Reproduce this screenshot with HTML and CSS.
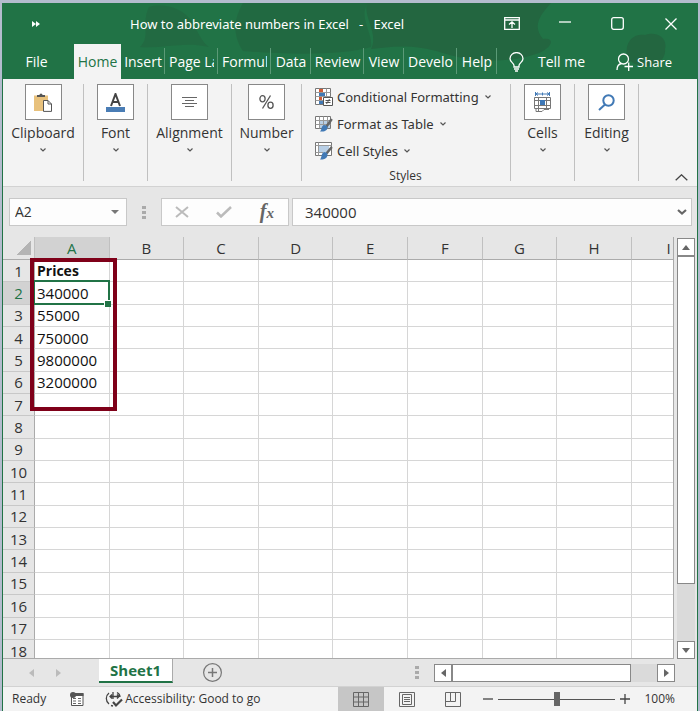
FILE: index.html
```html
<!DOCTYPE html>
<html lang="en">
<head>
    <meta charset="UTF-8">
    <meta name="viewport" content="width=device-width, initial-scale=1.0">
    <title>How to abbreviate numbers in Excel - Excel</title>
    <link rel="stylesheet" href="styles.css">
</head>
<body>
    <div class="window">
        <!-- Title bar and ribbon tabs -->
        <header class="top">
            <svg class="top-art" viewBox="0 0 694 76" preserveAspectRatio="none" aria-hidden="true">
                <path d="M146 4C160 0 180 4 190 20C196 32 200 40 206 44C180 38 160 46 137 44C148 34 138 20 146 4Z" opacity=".6"/>
                <path d="M240 0H365C355 14 370 30 368 44C340 52 290 52 240 48C228 30 232 14 240 0Z" opacity=".7"/>
                <path d="M364 0H548C535 14 530 24 540 36C552 34 550 44 536 50C510 60 470 60 440 50C410 40 385 44 368 46C376 30 360 14 364 0Z"/>
                <path d="M625 56C620 40 630 30 642 32C652 28 665 34 662 46C664 62 640 70 625 56Z"/>
            </svg>
            <div class="title-bar">
                <button class="quick" aria-label="Quick access"><svg width="8" height="6" viewBox="0 0 8 6"><path d="M0 0L4 3L0 6ZM4 0L8 3L4 6Z" fill="#fff"/></svg></button>
                <span class="title">How to abbreviate numbers in Excel &nbsp;&nbsp;-&nbsp;&nbsp; Excel</span>
                <div class="window-buttons">
                    <button aria-label="Ribbon display"><svg width="16" height="13" viewBox="0 0 16 13"><path d="M.7.7H15.3V12.3H.7ZM.7 3H15.3M8 11V5M5 7.5L8 4.8L11 7.5"/></svg></button>
                    <button aria-label="Minimize"><svg width="12" height="12" viewBox="0 0 12 12"><path d="M0 4H12"/></svg></button>
                    <button aria-label="Maximize"><svg width="13" height="13" viewBox="0 0 13 13"><rect x=".7" y=".7" width="11.6" height="11.6" rx="2"/></svg></button>
                    <button aria-label="Close"><svg width="12" height="12" viewBox="0 0 12 12"><path d="M.5.5L11.5 11.5M11.5.5L.5 11.5"/></svg></button>
                </div>
            </div>
            <nav class="tabs">
                <button class="tab tab-file">File</button>
                <button class="tab tab-home active">Home</button>
                <button class="tab tab-insert">Insert</button>
                <button class="tab tab-wide clip">Page La</button>
                <button class="tab tab-wide clip">Formul</button>
                <button class="tab tab-data">Data</button>
                <button class="tab tab-wide">Review</button>
                <button class="tab tab-data">View</button>
                <button class="tab tab-wide">Develo</button>
                <button class="tab tab-data">Help</button>
                <button class="tell-me">
                    <svg width="15" height="20" viewBox="0 0 15 20"><path d="M5 15V13.5C5 11 1 10 1 6.7A6.4 6 0 0 1 14 6.7C14 10 10 11 10 13.5V15ZM5 17H10M6 19H9"/></svg>
                    Tell me
                </button>
                <button class="share">
                    <svg width="17" height="18" viewBox="0 0 17 18"><circle cx="7.5" cy="6" r="5"/><path d="M1 17C1 13 3 11 5.5 10.5M8.5 13.5H17M12.7 9.5V18"/></svg>
                    Share
                </button>
            </nav>
        </header>

        <!-- Ribbon -->
        <section class="ribbon">
            <button class="group group-clipboard">
                <span class="group-icon"><svg width="18" height="19" viewBox="0 0 18 19"><path d="M0 2.5H14V18H0Z" fill="#e8c17c"/><path d="M3 4V2H5.5A1.5 1.5 0 0 1 8.5 2H11V4Z" fill="#555"/><path d="M9.5 7.5H14L17.5 11V18.4H9.5ZM14 7.5V11H17.5" fill="#fff" stroke="#555"/></svg></span>
                <span>Clipboard</span>
                <svg class="chevron" width="6" height="4" viewBox="0 0 6 4"><path d="M.5.5L3 3L5.5.5"/></svg>
            </button>
            <button class="group group-small">
                <span class="group-icon"><svg width="19" height="19" viewBox="0 0 19 19"><path d="M5 13L9.5 1L14 13M6.5 9H12.5" fill="none" stroke="#444" stroke-width="2"/><rect y="14" width="19" height="5" fill="#4a7db5"/></svg></span>
                <span>Font</span>
                <svg class="chevron" width="6" height="4" viewBox="0 0 6 4"><path d="M.5.5L3 3L5.5.5"/></svg>
            </button>
            <button class="group group-alignment">
                <span class="group-icon"><svg width="15" height="11" viewBox="0 0 15 11"><path d="M0 .5H15M3 3.5H12M0 6.5H15M3 9.5H12" stroke="#666"/></svg></span>
                <span>Alignment</span>
                <svg class="chevron" width="6" height="4" viewBox="0 0 6 4"><path d="M.5.5L3 3L5.5.5"/></svg>
            </button>
            <button class="group group-number">
                <span class="group-icon"><svg width="15" height="14" viewBox="0 0 15 14"><g fill="none" stroke="#555" stroke-width="1.3"><ellipse cx="3.5" cy="3.8" rx="2.6" ry="3.1"/><ellipse cx="11.5" cy="10.2" rx="2.6" ry="3.1"/><path d="M11.5.5L3.5 13.5"/></g></svg></span>
                <span>Number</span>
                <svg class="chevron" width="6" height="4" viewBox="0 0 6 4"><path d="M.5.5L3 3L5.5.5"/></svg>
            </button>
            <div class="styles-group">
                <button class="style-row">
                    <svg width="18" height="18" viewBox="0 0 18 18"><path d="M.5.5H15.5V16.5H.5Z" fill="#fff" stroke="#777"/><path d="M4.5.5V16.5M11.5.5V16.5M.5 4.5H15.5M.5 8.5H15.5M.5 12.5H15.5" stroke="#999"/><path d="M4 1H8V4H4ZM4 9H7V12H4Z" fill="#d05a35"/><path d="M4 5H10V8H4ZM4 13H8V16H4Z" fill="#4179b5"/><path d="M8.5 9.5H17.5V17.5H8.5Z" fill="#fff" stroke="#555"/><path d="M10.5 12.5H15.5M10.5 14.5H15.5M14.5 11L11.5 16" stroke="#555"/></svg>
                    Conditional Formatting
                    <svg class="chevron" width="6" height="4" viewBox="0 0 6 4"><path d="M.5.5L3 3L5.5.5"/></svg>
                </button>
                <button class="style-row">
                    <svg width="18" height="18" viewBox="0 0 18 18"><path d="M.5 1.5H15.5V13.5H.5Z" fill="#fff" stroke="#777"/><path d="M5 5H15V13H5Z" fill="#b8cfe6"/><path d="M4.5 1.5V13.5M8.5 1.5V13.5M12.5 1.5V13.5M.5 5.5H15.5M.5 9.5H15.5" stroke="#999"/><path d="M16.8 4L11.5 11.5" stroke="#666" stroke-width="2.5"/><path d="M9 10C11 10 13 11 12.5 13C12 16 8 17 5 16.5C7 15 6 11 9 10Z" fill="#4179b5"/></svg>
                    Format as Table
                    <svg class="chevron" width="6" height="4" viewBox="0 0 6 4"><path d="M.5.5L3 3L5.5.5"/></svg>
                </button>
                <button class="style-row">
                    <svg width="18" height="18" viewBox="0 0 18 18"><path d="M.5.5H16.5V13.5H.5Z" fill="#fff" stroke="#777"/><path d="M4 4H14V10H4Z" fill="#b8cfe6"/><path d="M3.5.5V13.5M.5 3.5H16.5M.5 10.5H8" stroke="#999"/><path d="M16.8 5L11.5 11.5" stroke="#666" stroke-width="2.5"/><path d="M9 10C11 10 13 11 12.5 13C12 17 8 18 5 17.5C7 16 6 11 9 10Z" fill="#4179b5"/></svg>
                    Cell Styles
                    <svg class="chevron" width="6" height="4" viewBox="0 0 6 4"><path d="M.5.5L3 3L5.5.5"/></svg>
                </button>
                <span class="styles-label">Styles</span>
            </div>
            <button class="group group-small">
                <span class="group-icon"><svg width="18" height="20" viewBox="0 0 18 20"><path d="M2 2H15M1.5 0V4M15.5 0V4M4 .5L2 2L4 3.5M13 .5L15 2L13 3.5M8.5.5V3.5" fill="none" stroke="#4179b5"/><path d="M.5 5.5H16.5V16.5H.5ZM4.5 5.5V19M12.5 5.5V16M.5 8.5H16.5M.5 13.5H16.5M2 16.5V19.5H8L10 17.5H15" fill="none" stroke="#777"/><path d="M6 8H11V13H6Z" fill="#3c78b8"/></svg></span>
                <span>Cells</span>
                <svg class="chevron" width="6" height="4" viewBox="0 0 6 4"><path d="M.5.5L3 3L5.5.5"/></svg>
            </button>
            <button class="group group-small">
                <span class="group-icon"><svg width="17" height="17" viewBox="0 0 17 17"><g fill="none" stroke="#4179b5" stroke-width="2"><circle cx="10.5" cy="6.5" r="5.2"/><path d="M7 10.5L1 16"/></g></svg></span>
                <span>Editing</span>
                <svg class="chevron" width="6" height="4" viewBox="0 0 6 4"><path d="M.5.5L3 3L5.5.5"/></svg>
            </button>
            <button class="collapse" aria-label="Collapse the ribbon"><svg width="13" height="7" viewBox="0 0 13 7"><path d="M.7 6.3L6.5.8L12.3 6.3" fill="none" stroke="#444" stroke-width="1.3"/></svg></button>
        </section>

        <!-- Formula bar -->
        <section class="formula-bar">
            <div class="name-box">
                <input class="name-input" type="text" value="A2" aria-label="Name box">
                <button aria-label="Open name list"><svg width="8" height="4" viewBox="0 0 8 4"><path d="M0 0H8L4 4Z" fill="#777"/></svg></button>
            </div>
            <span class="grip"></span>
            <div class="formula-buttons">
                <button aria-label="Cancel"><svg width="14" height="12" viewBox="0 0 14 12"><path d="M1 1L13 11M13 1L1 11" stroke="#bbb" stroke-width="2"/></svg></button>
                <button aria-label="Enter"><svg width="16" height="12" viewBox="0 0 16 12"><path d="M1 6.5L5 10.5L15 1" fill="none" stroke="#bbb" stroke-width="2.5"/></svg></button>
                <button class="fx" aria-label="Insert function">f<span>x</span></button>
            </div>
            <div class="formula-box">
                <input class="formula-input" type="text" value="340000" aria-label="Formula">
                <button aria-label="Expand formula bar"><svg width="10" height="7" viewBox="0 0 10 7"><path d="M1 1L5 4.5L9 1" fill="none" stroke="#666" stroke-width="2.2"/></svg></button>
            </div>
        </section>

        <!-- Worksheet -->
        <main class="sheet-area">
            <div class="sheet">
                <table class="grid">
                    <colgroup><col class="row-col"><col span="9"></colgroup>
                    <thead>
                        <tr><th class="corner"></th><th class="selected">A</th><th>B</th><th>C</th><th>D</th><th>E</th><th>F</th><th>G</th><th>H</th><th>I</th></tr>
                    </thead>
                    <tbody>
                        <tr><th>1</th><td class="bold">Prices</td><td></td><td></td><td></td><td></td><td></td><td></td><td></td><td></td></tr>
                        <tr><th class="selected">2</th><td class="current">340000</td><td></td><td></td><td></td><td></td><td></td><td></td><td></td><td></td></tr>
                        <tr><th>3</th><td>55000</td><td></td><td></td><td></td><td></td><td></td><td></td><td></td><td></td></tr>
                        <tr><th>4</th><td>750000</td><td></td><td></td><td></td><td></td><td></td><td></td><td></td><td></td></tr>
                        <tr><th>5</th><td>9800000</td><td></td><td></td><td></td><td></td><td></td><td></td><td></td><td></td></tr>
                        <tr><th>6</th><td>3200000</td><td></td><td></td><td></td><td></td><td></td><td></td><td></td><td></td></tr>
                        <tr><th>7</th><td></td><td></td><td></td><td></td><td></td><td></td><td></td><td></td><td></td></tr>
                        <tr><th>8</th><td></td><td></td><td></td><td></td><td></td><td></td><td></td><td></td><td></td></tr>
                        <tr><th>9</th><td></td><td></td><td></td><td></td><td></td><td></td><td></td><td></td><td></td></tr>
                        <tr><th>10</th><td></td><td></td><td></td><td></td><td></td><td></td><td></td><td></td><td></td></tr>
                        <tr><th>11</th><td></td><td></td><td></td><td></td><td></td><td></td><td></td><td></td><td></td></tr>
                        <tr><th>12</th><td></td><td></td><td></td><td></td><td></td><td></td><td></td><td></td><td></td></tr>
                        <tr><th>13</th><td></td><td></td><td></td><td></td><td></td><td></td><td></td><td></td><td></td></tr>
                        <tr><th>14</th><td></td><td></td><td></td><td></td><td></td><td></td><td></td><td></td><td></td></tr>
                        <tr><th>15</th><td></td><td></td><td></td><td></td><td></td><td></td><td></td><td></td><td></td></tr>
                        <tr><th>16</th><td></td><td></td><td></td><td></td><td></td><td></td><td></td><td></td><td></td></tr>
                        <tr><th>17</th><td></td><td></td><td></td><td></td><td></td><td></td><td></td><td></td><td></td></tr>
                        <tr><th>18</th><td></td><td></td><td></td><td></td><td></td><td></td><td></td><td></td><td></td></tr>
                    </tbody>
                </table>
                <div class="highlight"></div>
            </div>
            <div class="v-scroll">
                <button aria-label="Scroll up"><svg width="8" height="5" viewBox="0 0 8 5"><path d="M0 5L4 0L8 5Z"/></svg></button>
                <div class="v-thumb"></div>
                <div class="v-track"></div>
                <button aria-label="Scroll down"><svg width="8" height="5" viewBox="0 0 8 5"><path d="M0 0L4 5L8 0Z"/></svg></button>
            </div>
        </main>

        <!-- Sheet tabs and horizontal scroll bar -->
        <div class="sheet-tabs">
            <div class="sheet-nav">
                <button aria-label="Previous sheet"><svg width="5" height="8" viewBox="0 0 5 8"><path d="M5 0L0 4L5 8Z"/></svg></button>
                <button aria-label="Next sheet"><svg width="5" height="8" viewBox="0 0 5 8"><path d="M0 0L5 4L0 8Z"/></svg></button>
            </div>
            <button class="sheet-tab">Sheet1</button>
            <button class="add-sheet" aria-label="New sheet"><svg width="19" height="19" viewBox="0 0 19 19"><g fill="none" stroke="#777"><circle cx="9.5" cy="9.5" r="8.9" stroke-width="1.2"/><path d="M5 9.5H14M9.5 5V14" stroke-width="1.5"/></g></svg></button>
            <span class="grip"></span>
            <div class="h-scroll">
                <button aria-label="Scroll left"><svg width="5" height="8" viewBox="0 0 5 8"><path d="M5 0L0 4L5 8Z"/></svg></button>
                <div class="h-thumb"></div>
                <div class="h-track"></div>
                <button aria-label="Scroll right"><svg width="5" height="8" viewBox="0 0 5 8"><path d="M0 0L5 4L0 8Z"/></svg></button>
            </div>
        </div>

        <!-- Status bar -->
        <footer class="status-bar">
            <span class="ready">Ready</span>
            <button class="macro" aria-label="Record macro"><svg width="14" height="14" viewBox="0 0 14 14"><path d="M1.5 3V13.5H13V1.5H5" fill="#fff" stroke="#555"/><path d="M5 1H13.5V4H5Z" fill="#555"/><circle cx="3" cy="3" r="3" fill="#555"/><path d="M3 6.5H6M8 6.5H11M3 9H6M8 9H11M3 11.5H6M8 11.5H11" stroke="#666"/></svg></button>
            <button class="accessibility">
                <svg width="18" height="17" viewBox="0 0 18 17"><g fill="none" stroke="#444" stroke-width="1.3"><path d="M4 2A7 7 0 0 0 4 13M6 14.5L8 15M8 1V8M5 5.5H14M12 1.5C14 2.5 15 4 15 6M7 3.5L5 5.5L7 7.5M12 3.5L14 5.5L12 7.5"/><path d="M8 11L11 14.5L17 8.5" stroke-width="2.2"/></g></svg>
                Accessibility: Good to go
            </button>
            <div class="views">
                <button class="view active" aria-label="Normal view"><svg width="16" height="15" viewBox="0 0 16 15"><path d="M.5.5H15.5V14.5H.5ZM.5 5H15.5M.5 10H15.5M5.5.5V14.5M10.5.5V14.5"/></svg></button>
                <button class="view" aria-label="Page layout view"><svg width="16" height="15" viewBox="0 0 16 15"><path d="M.5.5H15.5V14.5H.5ZM3.5 2.5H12.5V12.5H3.5ZM5 5.5H11M5 7.5H11M5 9.5H11"/></svg></button>
                <button class="view" aria-label="Page break view"><svg width="16" height="15" viewBox="0 0 16 15"><path d="M.5.5H15.5V14.5H.5ZM5.5.5V9.5H.5M5.5 9.5H10.5V.5"/></svg></button>
            </div>
            <div class="zoom">
                <button aria-label="Zoom out"><svg width="10" height="10" viewBox="0 0 10 10"><path d="M0 5H10"/></svg></button>
                <input class="zoom-slider" type="range" min="0" max="100" value="50" aria-label="Zoom">
                <button aria-label="Zoom in"><svg width="10" height="10" viewBox="0 0 10 10"><path d="M0 5H10M5 0V10"/></svg></button>
                <span class="zoom-value">100%</span>
            </div>
        </footer>
    </div>
</body>
</html>
```
FILE: styles.css
```css
* {
    box-sizing: border-box;
}

/* General body styling */
body {
    margin: 0;
    height: 100vh;
    padding: 3px 2px 0 2px;
    background-color: #b4bcce;
    font-family: "Open Sans", "Noto Sans", sans-serif;
    font-size: 14px;
    line-height: 18px;
    color: #333;
}

button,
input {
    margin: 0;
    padding: 0;
    border: none;
    background: none;
    font: inherit;
    color: inherit;
}

svg {
    display: block;
    flex: none;
}

.window {
    display: flex;
    flex-direction: column;
    height: 100%;
    border: 1px solid #217346;
    border-top: none;
    border-bottom: none;
    background-color: #e6e6e6;
}

/* Title bar */
.top {
    position: relative;
    background-color: #217346;
    color: #fff;
}

.top-art {
    position: absolute;
    top: 0;
    left: 0;
    width: 100%;
    height: 100%;
    fill: #24633f;
    opacity: 0.8;
}

.title-bar {
    position: relative;
    display: flex;
    align-items: center;
    height: 41px;
}

.quick {
    width: 66px;
    display: flex;
    justify-content: center;
}

.title {
    flex: 1;
    padding-left: 61px;
    font-family: "Noto Sans", sans-serif;
    font-size: 13px;
    white-space: nowrap;
}

.window-buttons {
    display: flex;
}

.window-buttons button {
    width: 53px;
    height: 38px;
    display: flex;
    align-items: center;
    justify-content: center;
}

.window-buttons path,
.window-buttons rect,
.tabs path,
.tabs circle {
    fill: none;
    stroke: #fff;
    stroke-width: 1.3;
}

/* Ribbon tabs */
.tabs {
    position: relative;
    display: flex;
    height: 35px;
}

.tab {
    height: 35px;
    text-align: center;
    white-space: nowrap;
    background: linear-gradient(#5b9a77, #5b9a77) right 4px / 1px 26px no-repeat;
}

.tab-file {
    width: 71px;
    padding-right: 4px;
    background: none;
}

.tab-home {
    width: 47px;
}

.tab-insert {
    width: 44px;
}

.tab-wide {
    width: 53px;
}

.tab-data {
    width: 40px;
}

.clip {
    overflow: hidden;
    border-right: 4px solid transparent;
    padding-left: 4px;
    text-align: left;
    background-origin: border-box;
}

.tab.active {
    background: #f3f3f3;
    color: #217346;
}

.tell-me {
    display: flex;
    align-items: center;
    gap: 14px;
    padding-left: 12px;
}

.share {
    display: flex;
    align-items: center;
    gap: 4px;
    margin-left: auto;
    padding-right: 25px;
    font-size: 13px;
}

/* Ribbon */
.ribbon {
    display: flex;
    height: 108px;
    padding: 5px 0;
    background-color: #f3f3f3;
    border-bottom: 1px solid #d2d2d2;
}

.group {
    display: flex;
    flex-direction: column;
    align-items: center;
    border-right: 1px solid #c0c0c0;
}

.group-icon {
    display: flex;
    align-items: center;
    justify-content: center;
    width: 37px;
    height: 36px;
    margin-bottom: 4px;
    background-color: #fff;
    border: 1px solid #888;
}

.chevron {
    margin-top: 6px;
}

.chevron path {
    fill: none;
    stroke: #555;
    stroke-width: 1.2;
}

.group-clipboard {
    width: 81px;
}

.group-small {
    width: 64px;
}

.group-alignment {
    width: 84px;
}

.group-number {
    width: 70px;
}

.styles-group {
    display: flex;
    flex-direction: column;
    align-items: flex-start;
    width: 209px;
    padding-left: 13px;
    border-right: 1px solid #c0c0c0;
}

.style-row {
    display: flex;
    align-items: center;
    gap: 4px;
    height: 27px;
    margin-top: -1px;
    margin-bottom: 1px;
    font-family: "Noto Sans", sans-serif;
    font-size: 13px;
    white-space: nowrap;
}

.style-row .chevron {
    margin: 0 0 0 2px;
}

.styles-label {
    align-self: center;
    margin-top: auto;
    padding-right: 14px;
    font-size: 12px;
    line-height: 10px;
}

.collapse {
    margin: auto 9px 0 auto;
}

/* Formula bar */
.formula-bar {
    display: flex;
    align-items: center;
    height: 50px;
    padding: 0 5px 0 6px;
    font-size: 15px;
}

.name-box,
.formula-buttons,
.formula-box {
    display: flex;
    align-items: center;
    height: 28px;
    background-color: #fdfdfd;
    border: 1px solid #c8c8c8;
}

.name-box {
    width: 118px;
    padding: 0 7px 0 5px;
}

.name-input,
.formula-input {
    flex: 1;
    min-width: 0;
}

.name-input {
    font-size: 14px;
}

.grip {
    width: 4px;
    height: 13px;
    margin: 0 15px;
    background: repeating-linear-gradient(#aaa 0 3px, transparent 3px 5px);
}

.formula-buttons {
    width: 128px;
    justify-content: space-between;
    padding: 0 14px 0 13px;
}

.fx {
    font-family: "Liberation Serif", serif;
    font-size: 20px;
    font-style: italic;
    font-weight: bold;
    color: #666;
}

.fx span {
    font-size: 15px;
}

.formula-box {
    flex: 1;
    margin-left: 3px;
    padding: 0 4px 0 12px;
}

/* Worksheet */
.sheet-area {
    flex: 1;
    min-height: 0;
    display: flex;
}

.sheet {
    position: relative;
    flex: 1;
    overflow: hidden;
    border-right: 1px solid #aaa;
    border-bottom: 1px solid #aaa;
}

.grid {
    width: 105%;
    height: 101%;
    table-layout: fixed;
    border-collapse: separate;
    border-spacing: 0;
    font-size: 15px;
}

.row-col {
    width: 32px;
}

.grid th,
.grid td {
    padding: 0;
    line-height: 18px;
}

.grid th {
    font-weight: normal;
    background-color: #e6e6e6;
    border-right: 1px solid #ababab;
    border-bottom: 1px solid #c8c8c8;
}

.grid thead th {
    height: 23px;
    border-right-color: #c0c0c0;
    border-bottom-color: #ababab;
}

.grid th.selected {
    background-color: #d2d2d2;
    color: #217346;
}

.grid th.corner {
    background: linear-gradient(135deg, transparent 50%, #b4b4b4 50%) 13px 4px / 15px 14px no-repeat #e6e6e6;
}

.grid td {
    padding-left: 2px;
    background-color: #fff;
    color: #111;
    border-right: 1px solid #d6d6d6;
    border-bottom: 1px solid #d6d6d6;
}

.grid .bold {
    font-size: 14px;
    font-weight: bold;
}

.grid .current {
    position: relative;
}

/* Selection frame with its fill handle */
.current::before {
    content: "";
    position: absolute;
    inset: -2px -1px -1px -1px;
    border: 2px solid #217346;
    border-left-width: 1px;
}

.current::after {
    content: "";
    position: absolute;
    right: -2px;
    bottom: -3px;
    width: 6px;
    height: 6px;
    background-color: #217346;
    border: 1px solid #fff;
    border-right: none;
    border-bottom: none;
}

.highlight {
    position: absolute;
    left: 27px;
    top: 21px;
    width: 87px;
    height: 153px;
    border: 4px solid #7f0019;
}

/* Scroll bars */
.v-scroll {
    display: flex;
    flex-direction: column;
    width: 18px;
    margin: 1px 2px 0 3px;
    background-color: #dadada;
}

.v-scroll button,
.h-scroll button {
    display: flex;
    align-items: center;
    justify-content: center;
    width: 18px;
    height: 18px;
    background-color: #fff;
    border: 1px solid #888;
    fill: #666;
}

.v-thumb {
    flex: 85;
    background-color: #fff;
    border: 1px solid #888;
}

.v-track {
    flex: 15;
}

/* Sheet tabs */
.sheet-tabs {
    display: flex;
    align-items: center;
    height: 28px;
    padding-right: 22px;
    border-bottom: 1px solid #d2d2d2;
}

.sheet-nav {
    display: flex;
    gap: 22px;
    width: 96px;
    padding-left: 26px;
    fill: #bbb;
}

.sheet-tab {
    align-self: flex-start;
    width: 74px;
    height: 24px;
    background-color: #fff;
    border-right: 1px solid #aaa;
    border-bottom: 2px solid #217346;
    color: #217346;
    font-size: 15px;
    font-weight: bold;
}

.add-sheet {
    margin-left: 30px;
}

.sheet-tabs .grip {
    margin-left: auto;
}

.h-scroll {
    display: flex;
    width: 241px;
    height: 18px;
    background-color: #dadada;
}

.h-thumb {
    flex: 87;
    background-color: #fff;
    border: 1px solid #888;
}

.h-track {
    flex: 13;
}

/* Status bar */
.status-bar {
    display: flex;
    align-items: center;
    height: 24px;
    padding: 0 22px 0 9px;
    background-color: #f3f3f3;
    font-size: 12px;
}

.macro {
    margin-left: 24px;
}

.accessibility {
    display: flex;
    align-items: center;
    gap: 2px;
    margin-left: 21px;
    white-space: nowrap;
}

.views {
    display: flex;
    margin-left: auto;
}

.view {
    display: flex;
    align-items: center;
    justify-content: center;
    width: 46px;
    height: 24px;
}

.view.active {
    background-color: #c6c6c6;
}

.view path {
    fill: none;
    stroke: #666;
}

.zoom {
    display: flex;
    align-items: center;
    gap: 5px;
    margin-left: 7px;
}

.zoom path {
    stroke: #444;
    stroke-width: 1.3;
}

.zoom-slider {
    appearance: none;
    width: 117px;
    height: 14px;
    background: linear-gradient(#555, #555) center / 100% 1px no-repeat;
}

.zoom-slider::-webkit-slider-thumb {
    appearance: none;
    width: 6px;
    height: 14px;
    background-color: #666;
}

.zoom-value {
    margin-left: 9px;
}
```
